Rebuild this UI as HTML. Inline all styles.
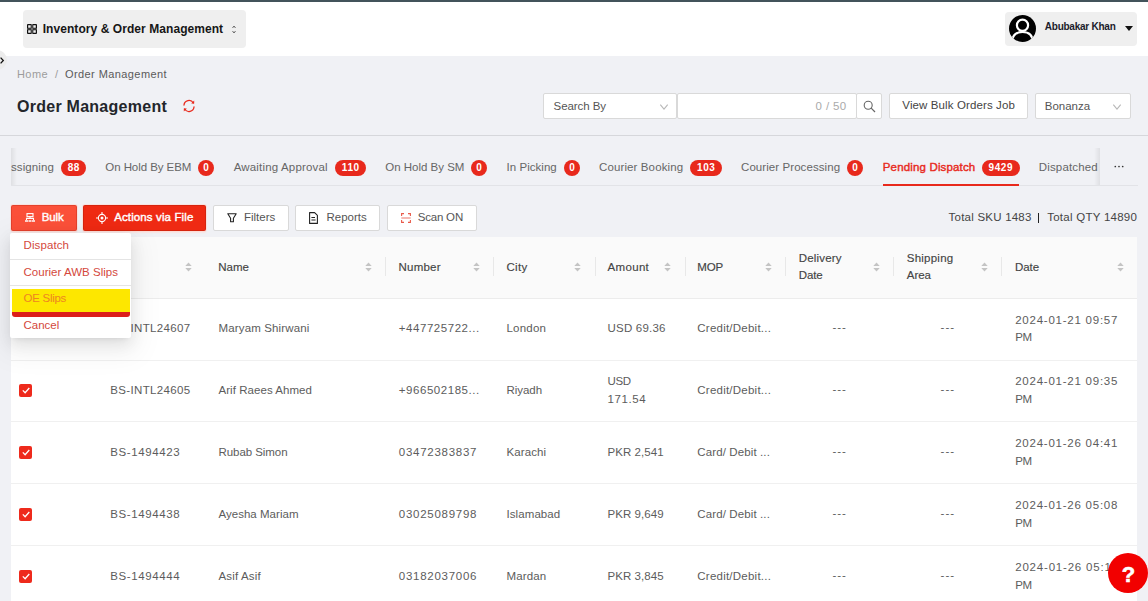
<!DOCTYPE html>
<html>
<head>
<meta charset="utf-8">
<title>Order Management</title>
<style>
*{box-sizing:border-box;margin:0;padding:0}
html,body{width:1148px;height:601px;overflow:hidden}
body{font-family:"Liberation Sans",sans-serif;background:#f0f1f5;color:#555;position:relative;font-size:12px}
.a{position:absolute;white-space:nowrap}
.box{background:#fff;border:1px solid #d9d9d9;border-radius:2px}
.badge{background:#e8291c;color:#fff;font-size:10px;font-weight:700;text-align:center;height:16px;line-height:16px;border-radius:8px;top:160px;letter-spacing:.6px;text-indent:.6px}
svg{position:absolute;overflow:visible}
</style>
</head>
<body>
<div class="a" style="left:0px;top:0px;width:1148px;height:2px;background:#43535b;"></div>
<div class="a" style="left:0px;top:2px;width:1148px;height:54px;background:#fff;"></div>
<div class="a" style="left:23px;top:10px;width:223px;height:38px;background:#efefef;border-radius:4px;"></div>
<svg style="left:27px;top:24px" width="10" height="10" viewBox="0 0 10 10"><g fill="none" stroke="#111" stroke-width="1.2"><rect x=".6" y=".6" width="3.7" height="3.7" rx=".4"/><rect x="5.7" y=".6" width="3.7" height="3.7" rx=".4"/><rect x=".6" y="5.7" width="3.7" height="3.7" rx=".4"/><rect x="5.7" y="5.7" width="3.7" height="3.7" rx=".4"/></g><path d="M5 1V9M1 5H9" stroke="#777" stroke-width=".8"/></svg>
<div class="a" style="left:42.7px;top:21px;font-size:12px;line-height:16px;color:#161616;letter-spacing:0.064px;font-weight:700;">Inventory &amp; Order Management</div>
<svg style="left:231.5px;top:24.5px" width="4" height="9" viewBox="0 0 4 9"><path d="M0.5 3L2 1L3.5 3M0.5 6L2 8L3.5 6" fill="none" stroke="#444" stroke-width="0.8"/></svg>
<div class="a" style="left:1005px;top:12px;width:132px;height:34px;background:#efefef;border-radius:4px;"></div>
<svg style="left:1009px;top:15px" width="27" height="27" viewBox="0 0 27 27"><defs><clipPath id="av"><circle cx="13.5" cy="13.5" r="13.5"/></clipPath></defs><circle cx="13.5" cy="13.5" r="13.5" fill="#000"/><g clip-path="url(#av)" fill="none" stroke="#fff" stroke-width="2.2"><circle cx="13.5" cy="10.2" r="5.6"/><path d="M3.3 27C3.3 19.5 8 17 13.5 17S23.7 19.5 23.7 27"/></g></svg>
<div class="a" style="left:1044.8px;top:19px;font-size:10px;line-height:16px;color:#1c1c2b;letter-spacing:-0.246px;font-weight:700;">Abubakar Khan</div>
<svg style="left:1125px;top:26px" width="8" height="5" viewBox="0 0 8 5"><path d="M0 0H8L4 5Z" fill="#111"/></svg>
<div class="a" style="left:-13px;top:50px;width:20px;height:20px;background:#ececec;border-radius:50%;"></div>
<svg style="left:0px;top:57px" width="4" height="7" viewBox="0 0 4 7"><path d="M0.6 0.6L3.3 3.5L0.6 6.4" fill="none" stroke="#111" stroke-width="1.3"/></svg>
<div class="a" style="left:17px;top:66px;font-size:11px;line-height:16px;color:#9c9c9c;letter-spacing:0.414px;">Home</div>
<div class="a" style="left:55px;top:66px;font-size:11px;line-height:16px;color:#9c9c9c;">/</div>
<div class="a" style="left:65px;top:66px;font-size:11px;line-height:16px;color:#5a5a5a;letter-spacing:0.414px;">Order Management</div>
<div class="a" style="left:17px;top:99px;font-size:16px;line-height:16px;color:#23262b;letter-spacing:0.262px;font-weight:700;">Order Management</div>
<svg style="left:182px;top:99px" width="14" height="14" viewBox="0 0 14 14"><g fill="none" stroke="#e8291c" stroke-width="1.3" stroke-linecap="round"><path d="M2 6A5 5 0 0 1 11.3 4"/><path d="M12 8A5 5 0 0 1 2.7 10"/></g><path d="M12.2 1.6V4.6H9.2Z" fill="#e8291c"/><path d="M1.8 12.4V9.4H4.8Z" fill="#e8291c"/></svg>
<div class="a box" style="left:543px;top:93px;width:134px;height:26px"></div>
<div class="a" style="left:553.6px;top:98px;font-size:11.5px;line-height:16px;color:#555;letter-spacing:-0.073px;">Search By</div>
<svg style="left:660px;top:104.3px" width="8" height="6" viewBox="0 0 8 6"><path d="M0.3 0.6L4 5.2L7.7 0.6" fill="none" stroke="#b8b8b8" stroke-width="1.1"/></svg>
<div class="a box" style="left:677px;top:93px;width:180px;height:26px"></div>
<div class="a" style="left:815.6px;top:98px;font-size:11.5px;line-height:16px;color:#aaa;letter-spacing:0.371px;">0 / 50</div>
<div class="a box" style="left:856px;top:93px;width:26px;height:26px"></div>
<svg style="left:863px;top:100px" width="13" height="13" viewBox="0 0 13 13"><circle cx="5.2" cy="5.2" r="4" fill="none" stroke="#666" stroke-width="1.1"/><path d="M8.2 8.2L12 12" stroke="#666" stroke-width="1.2"/></svg>
<div class="a box" style="left:889px;top:93px;width:139px;height:26px"></div>
<div class="a" style="left:902.3px;top:97px;font-size:11.5px;line-height:16px;color:#444;letter-spacing:0.117px;">View Bulk Orders Job</div>
<div class="a box" style="left:1035px;top:93px;width:96px;height:26px"></div>
<div class="a" style="left:1044.8px;top:98px;font-size:11.5px;line-height:16px;color:#555;letter-spacing:-0.029px;">Bonanza</div>
<svg style="left:1113px;top:104.3px" width="8" height="6" viewBox="0 0 8 6"><path d="M0.3 0.6L4 5.2L7.7 0.6" fill="none" stroke="#b8b8b8" stroke-width="1.1"/></svg>
<div class="a" style="left:0px;top:135px;width:1148px;height:1px;background:#d6d7db;"></div>
<div class="a" style="left:11px;top:185px;width:1127px;height:1px;background:#e2e3e7;"></div>
<div class="a" style="left:11px;top:159px;font-size:11.5px;line-height:16px;color:#666;letter-spacing:0.101px;">ssigning</div>
<div class="a badge" style="left:61px;width:25px">88</div>
<div class="a" style="left:105.3px;top:159px;font-size:11.5px;line-height:16px;color:#666;letter-spacing:-0.066px;">On Hold By EBM</div>
<div class="a badge" style="left:198px;width:16px">0</div>
<div class="a" style="left:233.7px;top:159px;font-size:11.5px;line-height:16px;color:#666;letter-spacing:0.164px;">Awaiting Approval</div>
<div class="a badge" style="left:335px;width:31px">110</div>
<div class="a" style="left:385.3px;top:159px;font-size:11.5px;line-height:16px;color:#666;letter-spacing:-0.011px;">On Hold By SM</div>
<div class="a badge" style="left:471px;width:16px">0</div>
<div class="a" style="left:506.6px;top:159px;font-size:11.5px;line-height:16px;color:#666;letter-spacing:0.034px;">In Picking</div>
<div class="a badge" style="left:564px;width:16px">0</div>
<div class="a" style="left:599px;top:159px;font-size:11.5px;line-height:16px;color:#666;letter-spacing:0.116px;">Courier Booking</div>
<div class="a badge" style="left:690px;width:32px">103</div>
<div class="a" style="left:741px;top:159px;font-size:11.5px;line-height:16px;color:#666;letter-spacing:0.073px;">Courier Processing</div>
<div class="a badge" style="left:847px;width:16px">0</div>
<div class="a" style="left:882.8px;top:159px;font-size:11.5px;line-height:16px;color:#e8291c;letter-spacing:0.154px;-webkit-text-stroke:0.4px #e8291c;">Pending Dispatch</div>
<div class="a badge" style="left:981.5px;width:38px">9429</div>
<div class="a" style="left:883px;top:184px;width:136px;height:2px;background:#e8291c;"></div>
<div class="a" style="left:1038.8px;top:159px;font-size:11.5px;line-height:16px;color:#666;letter-spacing:0.146px;">Dispatched</div>
<div class="a" style="left:11px;top:148px;width:6px;height:37px;background:linear-gradient(90deg,rgba(0,0,0,.075),rgba(0,0,0,0));"></div>
<div class="a" style="left:1094px;top:148px;width:6px;height:37px;background:linear-gradient(90deg,rgba(0,0,0,0),rgba(0,0,0,.07));"></div>
<div class="a" style="left:1100px;top:148px;width:38px;height:37px;background:#f0f1f5;"></div>
<svg style="left:1113.5px;top:165px" width="10" height="3" viewBox="0 0 10 3"><circle cx="1.3" cy="1.5" r="0.85" fill="#333"/><circle cx="5" cy="1.5" r="0.85" fill="#333"/><circle cx="8.7" cy="1.5" r="0.85" fill="#333"/></svg>
<div class="a" style="left:11px;top:205px;width:66px;height:26px;background:#fb5039;border-radius:2px;border:1px solid rgba(170,30,10,.28);box-shadow:0 0 0 1px rgba(255,214,206,.55),0 2px 1px rgba(255,220,214,.5);"></div>
<svg style="left:25px;top:213px" width="10" height="9" viewBox="0 0 10 9"><g fill="none" stroke="#fff" stroke-width="1.1"><rect x="2" y="0.6" width="6" height="3"/><path d="M5 3.6V5.4M1.5 7V5.4H8.5V7"/><path d="M0 8H3M3.5 8H6.5M7 8H10" stroke-width="1.6"/></g></svg>
<div class="a" style="left:41.7px;top:209px;font-size:11.5px;line-height:16px;color:#fff;letter-spacing:-0.068px;-webkit-text-stroke:0.4px #fff;">Bulk</div>
<div class="a" style="left:83px;top:205px;width:123px;height:26px;background:#ef2a13;border-radius:2px;border:1px solid rgba(150,20,5,.28);box-shadow:0 0 0 1px rgba(255,214,206,.55),0 2px 1px rgba(255,220,214,.5);"></div>
<svg style="left:96px;top:212px" width="12" height="12" viewBox="0 0 12 12"><g fill="none" stroke="#fff" stroke-width="1.1"><circle cx="6" cy="6" r="3.6"/><path d="M6 0V2.4M6 9.6V12M0 6H2.4M9.6 6H12"/></g><circle cx="6" cy="6" r="1.5" fill="#fff"/></svg>
<div class="a" style="left:114.2px;top:209px;font-size:11.5px;line-height:16px;color:#fff;letter-spacing:0.117px;-webkit-text-stroke:0.4px #fff;">Actions via File</div>
<div class="a box" style="left:213px;top:205px;width:75.5px;height:26px"></div>
<div class="a box" style="left:295px;top:205px;width:84.5px;height:26px"></div>
<div class="a box" style="left:387px;top:205px;width:89.5px;height:26px"></div>
<svg style="left:227px;top:213px" width="10" height="10" viewBox="0 0 10 10"><path d="M0.8 0.8H9.2L6.4 5.2V8.8H3.6V5.2Z" fill="none" stroke="#222" stroke-width="1.1" stroke-linejoin="round"/></svg>
<div class="a" style="left:243.9px;top:209px;font-size:11.5px;line-height:16px;color:#555;letter-spacing:0.013px;">Filters</div>
<svg style="left:309px;top:212px" width="9" height="12" viewBox="0 0 9 12"><path d="M0.6 0.6H5.6L8.4 3.4V11.4H0.6Z" fill="none" stroke="#222" stroke-width="1.1" stroke-linejoin="round"/><path d="M2.4 5.5H6M2.4 8H6.6" stroke="#222" stroke-width="1"/></svg>
<div class="a" style="left:326.5px;top:209px;font-size:11.5px;line-height:16px;color:#555;letter-spacing:-0.01px;">Reports</div>
<svg style="left:400.5px;top:213px" width="10" height="10" viewBox="0 0 10 10"><g fill="none" stroke="#e85a4a" stroke-width="1.1"><path d="M0.6 3V0.6H3M7 0.6H9.4V3M9.4 7V9.4H7M3 9.4H0.6V7"/><path d="M0.3 5H9.7" stroke-opacity=".75"/></g></svg>
<div class="a" style="left:417.7px;top:209px;font-size:11.5px;line-height:16px;color:#555;letter-spacing:-0.194px;">Scan ON</div>
<div class="a" style="left:948.6px;top:209px;font-size:11.5px;line-height:16px;color:#444;letter-spacing:0.221px;">Total SKU 1483</div>
<div class="a" style="left:1038px;top:212.5px;width:1.3px;height:10px;background:#222;"></div>
<div class="a" style="left:1047.2px;top:209px;font-size:11.5px;line-height:16px;color:#444;letter-spacing:0.26px;">Total QTY 14890</div>
<div class="a" style="left:11px;top:237px;width:1126px;height:364px;background:#fff;"></div>
<div class="a" style="left:11px;top:237px;width:1126px;height:61px;background:#fafafa;"></div>
<div class="a" style="left:11px;top:298px;width:1126px;height:1px;background:#ececec;"></div>
<div class="a" style="left:11px;top:360px;width:1126px;height:1px;background:#f0f0f0;"></div>
<div class="a" style="left:11px;top:421px;width:1126px;height:1px;background:#f0f0f0;"></div>
<div class="a" style="left:11px;top:483px;width:1126px;height:1px;background:#f0f0f0;"></div>
<div class="a" style="left:11px;top:545px;width:1126px;height:1px;background:#f0f0f0;"></div>
<svg style="left:185px;top:262px" width="7" height="10" viewBox="0 0 7 10"><path d="M0.3 4L3.5 0.4L6.7 4Z" fill="#c4c4c4"/><path d="M0.3 6L3.5 9.6L6.7 6Z" fill="#c4c4c4"/></svg>
<svg style="left:365px;top:262px" width="7" height="10" viewBox="0 0 7 10"><path d="M0.3 4L3.5 0.4L6.7 4Z" fill="#c4c4c4"/><path d="M0.3 6L3.5 9.6L6.7 6Z" fill="#c4c4c4"/></svg>
<svg style="left:472.7px;top:262px" width="7" height="10" viewBox="0 0 7 10"><path d="M0.3 4L3.5 0.4L6.7 4Z" fill="#c4c4c4"/><path d="M0.3 6L3.5 9.6L6.7 6Z" fill="#c4c4c4"/></svg>
<svg style="left:573.7px;top:262px" width="7" height="10" viewBox="0 0 7 10"><path d="M0.3 4L3.5 0.4L6.7 4Z" fill="#c4c4c4"/><path d="M0.3 6L3.5 9.6L6.7 6Z" fill="#c4c4c4"/></svg>
<svg style="left:663.7px;top:262px" width="7" height="10" viewBox="0 0 7 10"><path d="M0.3 4L3.5 0.4L6.7 4Z" fill="#c4c4c4"/><path d="M0.3 6L3.5 9.6L6.7 6Z" fill="#c4c4c4"/></svg>
<svg style="left:764.7px;top:262px" width="7" height="10" viewBox="0 0 7 10"><path d="M0.3 4L3.5 0.4L6.7 4Z" fill="#c4c4c4"/><path d="M0.3 6L3.5 9.6L6.7 6Z" fill="#c4c4c4"/></svg>
<svg style="left:872.7px;top:262px" width="7" height="10" viewBox="0 0 7 10"><path d="M0.3 4L3.5 0.4L6.7 4Z" fill="#c4c4c4"/><path d="M0.3 6L3.5 9.6L6.7 6Z" fill="#c4c4c4"/></svg>
<svg style="left:980.7px;top:262px" width="7" height="10" viewBox="0 0 7 10"><path d="M0.3 4L3.5 0.4L6.7 4Z" fill="#c4c4c4"/><path d="M0.3 6L3.5 9.6L6.7 6Z" fill="#c4c4c4"/></svg>
<svg style="left:1116.7px;top:262px" width="7" height="10" viewBox="0 0 7 10"><path d="M0.3 4L3.5 0.4L6.7 4Z" fill="#c4c4c4"/><path d="M0.3 6L3.5 9.6L6.7 6Z" fill="#c4c4c4"/></svg>
<div class="a" style="left:218.3px;top:259px;font-size:11.5px;line-height:16px;color:#444;letter-spacing:-0.019px;-webkit-text-stroke:0.15px #444;">Name</div>
<div class="a" style="left:398.6px;top:259px;font-size:11.5px;line-height:16px;color:#444;letter-spacing:0.199px;-webkit-text-stroke:0.15px #444;">Number</div>
<div class="a" style="left:506.5px;top:259px;font-size:11.5px;line-height:16px;color:#444;letter-spacing:0.299px;-webkit-text-stroke:0.15px #444;">City</div>
<div class="a" style="left:607.6px;top:259px;font-size:11.5px;line-height:16px;color:#444;letter-spacing:0.311px;-webkit-text-stroke:0.15px #444;">Amount</div>
<div class="a" style="left:697.3px;top:259px;font-size:11.5px;line-height:16px;color:#444;letter-spacing:-0.199px;-webkit-text-stroke:0.15px #444;">MOP</div>
<div class="a" style="left:1015px;top:259px;font-size:11.5px;line-height:16px;color:#444;letter-spacing:-0.073px;-webkit-text-stroke:0.15px #444;">Date</div>
<div class="a" style="left:798.7px;top:250px;font-size:11.5px;line-height:16px;color:#444;letter-spacing:0.183px;-webkit-text-stroke:0.15px #444;">Delivery</div>
<div class="a" style="left:798.7px;top:267px;font-size:11.5px;line-height:16px;color:#444;letter-spacing:-0.073px;-webkit-text-stroke:0.15px #444;">Date</div>
<div class="a" style="left:906.8px;top:250px;font-size:11.5px;line-height:16px;color:#444;letter-spacing:0.23px;-webkit-text-stroke:0.15px #444;">Shipping</div>
<div class="a" style="left:906.8px;top:267px;font-size:11.5px;line-height:16px;color:#444;letter-spacing:-0.073px;-webkit-text-stroke:0.15px #444;">Area</div>
<div class="a" style="left:385px;top:257px;width:1px;height:19px;background:#e8e8e8;"></div>
<div class="a" style="left:493px;top:257px;width:1px;height:19px;background:#e8e8e8;"></div>
<div class="a" style="left:594.5px;top:257px;width:1px;height:19px;background:#e8e8e8;"></div>
<div class="a" style="left:684.5px;top:257px;width:1px;height:19px;background:#e8e8e8;"></div>
<div class="a" style="left:785px;top:257px;width:1px;height:19px;background:#e8e8e8;"></div>
<div class="a" style="left:893px;top:257px;width:1px;height:19px;background:#e8e8e8;"></div>
<div class="a" style="left:1001px;top:257px;width:1px;height:19px;background:#e8e8e8;"></div>
<div class="a" style="left:19px;top:321.5px;width:13px;height:13px;background:#ee2a1c;border-radius:2px"></div>
<svg style="left:21.5px;top:324.5px" width="8" height="7" viewBox="0 0 8 7"><path d="M0.8 3.4L3.1 5.7L7.3 1" fill="none" stroke="#fff" stroke-width="1.3"/></svg>
<div class="a" style="left:110.2px;top:320px;font-size:11.5px;line-height:16px;color:#5c5c5c;letter-spacing:0.361px;">BS-INTL24607</div>
<div class="a" style="left:218.5px;top:320px;font-size:11.5px;line-height:16px;color:#5c5c5c;letter-spacing:0.145px;">Maryam Shirwani</div>
<div class="a" style="left:398.8px;top:320px;font-size:11.5px;line-height:16px;color:#5c5c5c;letter-spacing:0.549px;">+447725722...</div>
<div class="a" style="left:506.5px;top:320px;font-size:11.5px;line-height:16px;color:#5c5c5c;letter-spacing:0.221px;">London</div>
<div class="a" style="left:607.6px;top:320px;font-size:11.5px;line-height:16px;color:#5c5c5c;letter-spacing:0.194px;">USD 69.36</div>
<div class="a" style="left:697.3px;top:320px;font-size:11.5px;line-height:16px;color:#5c5c5c;letter-spacing:0.233px;">Credit/Debit...</div>
<div class="a" style="left:832.5px;top:319px;font-size:11.5px;line-height:16px;color:#5c5c5c;letter-spacing:0.97px;">---</div>
<div class="a" style="left:940.6px;top:319px;font-size:11.5px;line-height:16px;color:#5c5c5c;letter-spacing:0.97px;">---</div>
<div class="a" style="left:1015.2px;top:312px;font-size:11.5px;line-height:16px;color:#5c5c5c;letter-spacing:0.762px;">2024-01-21 09:57</div>
<div class="a" style="left:1015.2px;top:329px;font-size:11.5px;line-height:16px;color:#5c5c5c;letter-spacing:-0.475px;">PM</div>
<div class="a" style="left:19px;top:383.5px;width:13px;height:13px;background:#ee2a1c;border-radius:2px"></div>
<svg style="left:21.5px;top:386.5px" width="8" height="7" viewBox="0 0 8 7"><path d="M0.8 3.4L3.1 5.7L7.3 1" fill="none" stroke="#fff" stroke-width="1.3"/></svg>
<div class="a" style="left:110.2px;top:382px;font-size:11.5px;line-height:16px;color:#5c5c5c;letter-spacing:0.361px;">BS-INTL24605</div>
<div class="a" style="left:218.5px;top:382px;font-size:11.5px;line-height:16px;color:#5c5c5c;letter-spacing:0.051px;">Arif Raees Ahmed</div>
<div class="a" style="left:398.8px;top:382px;font-size:11.5px;line-height:16px;color:#5c5c5c;letter-spacing:0.549px;">+966502185...</div>
<div class="a" style="left:506.5px;top:382px;font-size:11.5px;line-height:16px;color:#5c5c5c;letter-spacing:-0.05px;">Riyadh</div>
<div class="a" style="left:607.6px;top:373px;font-size:11.5px;line-height:16px;color:#5c5c5c;letter-spacing:-0.427px;">USD</div>
<div class="a" style="left:607.6px;top:391px;font-size:11.5px;line-height:16px;color:#5c5c5c;letter-spacing:0.554px;">171.54</div>
<div class="a" style="left:697.3px;top:382px;font-size:11.5px;line-height:16px;color:#5c5c5c;letter-spacing:0.233px;">Credit/Debit...</div>
<div class="a" style="left:832.5px;top:381px;font-size:11.5px;line-height:16px;color:#5c5c5c;letter-spacing:0.97px;">---</div>
<div class="a" style="left:940.6px;top:381px;font-size:11.5px;line-height:16px;color:#5c5c5c;letter-spacing:0.97px;">---</div>
<div class="a" style="left:1015.2px;top:373px;font-size:11.5px;line-height:16px;color:#5c5c5c;letter-spacing:0.762px;">2024-01-21 09:35</div>
<div class="a" style="left:1015.2px;top:391px;font-size:11.5px;line-height:16px;color:#5c5c5c;letter-spacing:-0.475px;">PM</div>
<div class="a" style="left:19px;top:445.5px;width:13px;height:13px;background:#ee2a1c;border-radius:2px"></div>
<svg style="left:21.5px;top:448.5px" width="8" height="7" viewBox="0 0 8 7"><path d="M0.8 3.4L3.1 5.7L7.3 1" fill="none" stroke="#fff" stroke-width="1.3"/></svg>
<div class="a" style="left:110.2px;top:444px;font-size:11.5px;line-height:16px;color:#5c5c5c;letter-spacing:0.606px;">BS-1494423</div>
<div class="a" style="left:218.5px;top:444px;font-size:11.5px;line-height:16px;color:#5c5c5c;letter-spacing:-0.062px;">Rubab Simon</div>
<div class="a" style="left:398.8px;top:444px;font-size:11.5px;line-height:16px;color:#5c5c5c;letter-spacing:0.731px;">03472383837</div>
<div class="a" style="left:506.5px;top:444px;font-size:11.5px;line-height:16px;color:#5c5c5c;letter-spacing:0.101px;">Karachi</div>
<div class="a" style="left:607.6px;top:444px;font-size:11.5px;line-height:16px;color:#5c5c5c;letter-spacing:0.042px;">PKR 2,541</div>
<div class="a" style="left:697.3px;top:444px;font-size:11.5px;line-height:16px;color:#5c5c5c;letter-spacing:0.117px;">Card/ Debit ...</div>
<div class="a" style="left:832.5px;top:443px;font-size:11.5px;line-height:16px;color:#5c5c5c;letter-spacing:0.97px;">---</div>
<div class="a" style="left:940.6px;top:443px;font-size:11.5px;line-height:16px;color:#5c5c5c;letter-spacing:0.97px;">---</div>
<div class="a" style="left:1015.2px;top:435px;font-size:11.5px;line-height:16px;color:#5c5c5c;letter-spacing:0.762px;">2024-01-26 04:41</div>
<div class="a" style="left:1015.2px;top:453px;font-size:11.5px;line-height:16px;color:#5c5c5c;letter-spacing:-0.475px;">PM</div>
<div class="a" style="left:19px;top:507.5px;width:13px;height:13px;background:#ee2a1c;border-radius:2px"></div>
<svg style="left:21.5px;top:510.5px" width="8" height="7" viewBox="0 0 8 7"><path d="M0.8 3.4L3.1 5.7L7.3 1" fill="none" stroke="#fff" stroke-width="1.3"/></svg>
<div class="a" style="left:110.2px;top:506px;font-size:11.5px;line-height:16px;color:#5c5c5c;letter-spacing:0.606px;">BS-1494438</div>
<div class="a" style="left:218.5px;top:506px;font-size:11.5px;line-height:16px;color:#5c5c5c;letter-spacing:0.024px;">Ayesha Mariam</div>
<div class="a" style="left:398.8px;top:506px;font-size:11.5px;line-height:16px;color:#5c5c5c;letter-spacing:0.731px;">03025089798</div>
<div class="a" style="left:506.5px;top:506px;font-size:11.5px;line-height:16px;color:#5c5c5c;letter-spacing:0.082px;">Islamabad</div>
<div class="a" style="left:607.6px;top:506px;font-size:11.5px;line-height:16px;color:#5c5c5c;letter-spacing:0.042px;">PKR 9,649</div>
<div class="a" style="left:697.3px;top:506px;font-size:11.5px;line-height:16px;color:#5c5c5c;letter-spacing:0.117px;">Card/ Debit ...</div>
<div class="a" style="left:832.5px;top:505px;font-size:11.5px;line-height:16px;color:#5c5c5c;letter-spacing:0.97px;">---</div>
<div class="a" style="left:940.6px;top:505px;font-size:11.5px;line-height:16px;color:#5c5c5c;letter-spacing:0.97px;">---</div>
<div class="a" style="left:1015.2px;top:497px;font-size:11.5px;line-height:16px;color:#5c5c5c;letter-spacing:0.762px;">2024-01-26 05:08</div>
<div class="a" style="left:1015.2px;top:515px;font-size:11.5px;line-height:16px;color:#5c5c5c;letter-spacing:-0.475px;">PM</div>
<div class="a" style="left:19px;top:569.5px;width:13px;height:13px;background:#ee2a1c;border-radius:2px"></div>
<svg style="left:21.5px;top:572.5px" width="8" height="7" viewBox="0 0 8 7"><path d="M0.8 3.4L3.1 5.7L7.3 1" fill="none" stroke="#fff" stroke-width="1.3"/></svg>
<div class="a" style="left:110.2px;top:568px;font-size:11.5px;line-height:16px;color:#5c5c5c;letter-spacing:0.606px;">BS-1494444</div>
<div class="a" style="left:218.5px;top:568px;font-size:11.5px;line-height:16px;color:#5c5c5c;letter-spacing:0.155px;">Asif Asif</div>
<div class="a" style="left:398.8px;top:568px;font-size:11.5px;line-height:16px;color:#5c5c5c;letter-spacing:0.731px;">03182037006</div>
<div class="a" style="left:506.5px;top:568px;font-size:11.5px;line-height:16px;color:#5c5c5c;letter-spacing:0.118px;">Mardan</div>
<div class="a" style="left:607.6px;top:568px;font-size:11.5px;line-height:16px;color:#5c5c5c;letter-spacing:0.042px;">PKR 3,845</div>
<div class="a" style="left:697.3px;top:568px;font-size:11.5px;line-height:16px;color:#5c5c5c;letter-spacing:0.233px;">Credit/Debit...</div>
<div class="a" style="left:832.5px;top:567px;font-size:11.5px;line-height:16px;color:#5c5c5c;letter-spacing:0.97px;">---</div>
<div class="a" style="left:940.6px;top:567px;font-size:11.5px;line-height:16px;color:#5c5c5c;letter-spacing:0.97px;">---</div>
<div class="a" style="left:1015.2px;top:559px;font-size:11.5px;line-height:16px;color:#5c5c5c;letter-spacing:0.806px;">2024-01-26 05:1</div>
<div class="a" style="left:1015.2px;top:577px;font-size:11.5px;line-height:16px;color:#5c5c5c;letter-spacing:-0.475px;">PM</div>
<div class="a" style="left:10px;top:233px;width:121px;height:105px;background:#fff;border-radius:2px;box-shadow:0 6px 16px rgba(0,0,0,.09),0 3px 6px -4px rgba(0,0,0,.14),0 9px 28px 8px rgba(0,0,0,.05);"></div>
<div class="a" style="left:23.5px;top:237px;font-size:11.5px;line-height:16px;color:#d4483c;letter-spacing:0.095px;">Dispatch</div>
<div class="a" style="left:10px;top:259px;width:121px;height:1px;background:#e4e4e4;"></div>
<div class="a" style="left:23.5px;top:264px;font-size:11.5px;line-height:16px;color:#d4483c;letter-spacing:0.02px;">Courier AWB Slips</div>
<div class="a" style="left:10px;top:285px;width:121px;height:1px;background:#e4e4e4;"></div>
<div class="a" style="left:12px;top:288.5px;width:118px;height:23.7px;background:#fde700;"></div>
<div class="a" style="left:12px;top:312.2px;width:118px;height:4.8px;background:#dc1f1b;border-radius:0 0 3px 3px;"></div>
<div class="a" style="left:23.5px;top:290px;font-size:11.5px;line-height:16px;color:#ee8520;letter-spacing:-0.267px;">OE Slips</div>
<div class="a" style="left:23.5px;top:317px;font-size:11.5px;line-height:16px;color:#d4483c;">Cancel</div>
<div class="a" style="left:1108px;top:553px;width:40px;height:40px;background:#f20000;border-radius:50%;"></div>
<div class="a" style="left:1121.8px;top:567px;font-size:22px;line-height:16px;color:#fff;font-weight:700;-webkit-text-stroke:0.6px #fff;">?</div>
</body>
</html>
